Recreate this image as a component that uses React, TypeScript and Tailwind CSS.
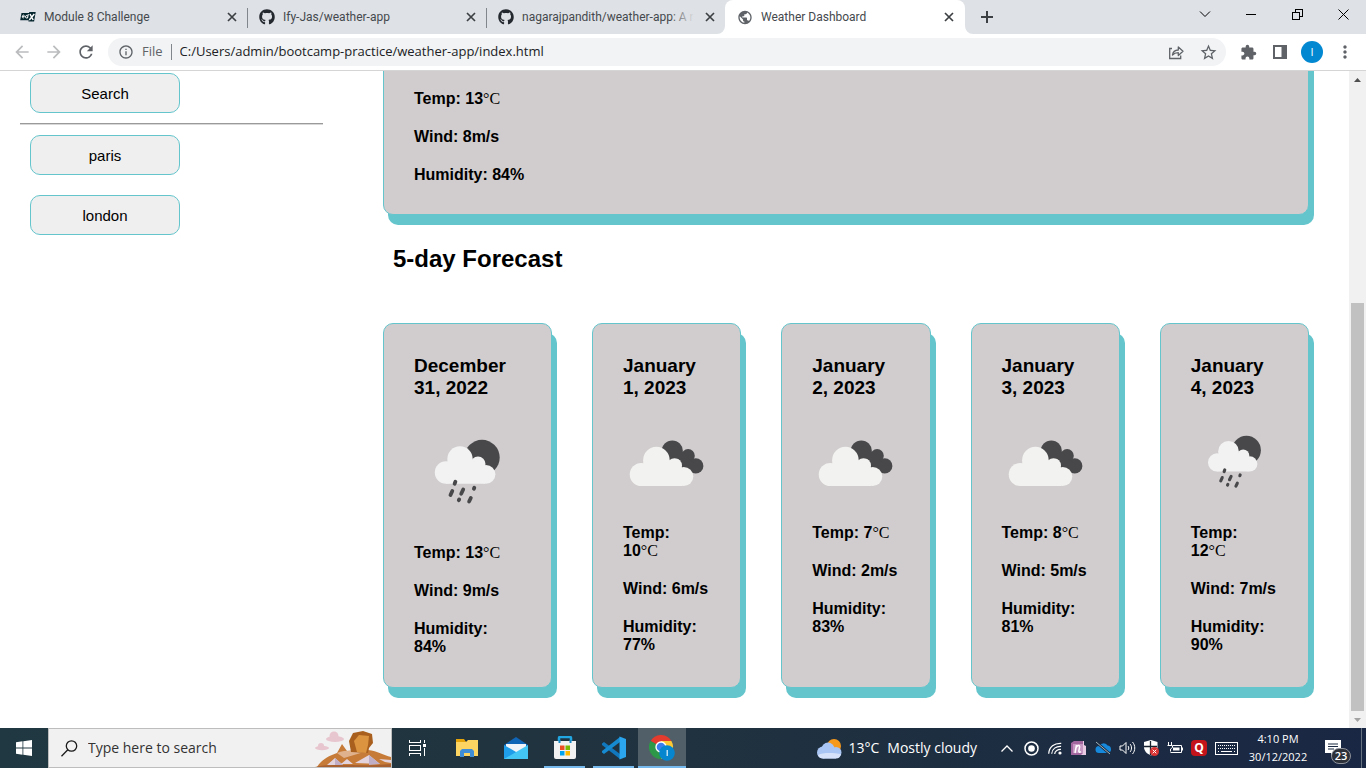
import type { ReactNode } from "react";
import { FaGithub } from "react-icons/fa";
import {
  MdArrowBack,
  MdArrowForward,
  MdExtension,
  MdInfoOutline,
  MdMoreVert,
  MdPublic,
  MdRefresh,
  MdStarBorder,
} from "react-icons/md";

/* ---------- browser chrome ---------- */

function CloseGlyph() {
  return (
    <svg width="10" height="10" viewBox="0 0 10 10" fill="none" stroke="#3c4043" strokeWidth="1.7">
      <path d="M1 1l8 8M9 1l-8 8" />
    </svg>
  );
}

function EdxIcon() {
  return (
    <svg width="16" height="16" viewBox="0 0 16 16">
      <path d="M1.5 4H9l.3-1h6.4l-1.6 9.5H8.4l.3-1.3H.2z" fill="#06262e" />
      <g fill="none" stroke="#fff" strokeWidth="1">
        <path d="M2.2 7.4h2.2c.2-1.6-1.8-1.8-2.1 0-.2 1.800 1 1.700 1.900 1.100M8.300 5L7.500 9.300M7.800 7c-1-1.400-2.400-.4-2.300 1 .1 1.400 1.600 1.300 2.200.1" />
        <path d="M10 5l3.200 6M14.300 5l-5 6" strokeWidth="1.500" />
      </g>
    </svg>
  );
}

type TabProps = { icon: ReactNode; title: string; active?: boolean; divider?: boolean };

function Tab({ icon, title, active = false, divider = false }: TabProps) {
  return (
    <div
      className={
        active
          ? "relative flex h-full w-60 items-center rounded-t-lg bg-white pr-2 pl-3"
          : "relative flex h-full w-[239px] items-center pr-[7px] pl-3"
      }
    >
      {active && (
        <>
          <svg className="absolute bottom-0 -left-2" width="8" height="8" viewBox="0 0 8 8">
            <path d="M8 0v8H0a8 8 0 0 0 8-8z" fill="#fff" />
          </svg>
          <svg className="absolute -right-2 bottom-0" width="8" height="8" viewBox="0 0 8 8">
            <path d="M0 0v8h8a8 8 0 0 1-8-8z" fill="#fff" />
          </svg>
        </>
      )}
      <span className="flex w-4 shrink-0 justify-center">{icon}</span>
      <span className="relative ml-2 min-w-0 flex-1 overflow-hidden font-['Roboto','Open_Sans',sans-serif] text-xs whitespace-nowrap text-[#45494d]">
        {title}
        {!active && (
          <span className="absolute inset-y-0 right-0 w-6 bg-linear-to-r from-transparent to-[#dee1e6]" />
        )}
      </span>
      <button aria-label={"Close " + title} className="ml-2 flex size-4 shrink-0 items-center justify-center">
        <CloseGlyph />
      </button>
      {divider && <span className="absolute top-2 -right-px h-5 w-px bg-[#80868b]" />}
    </div>
  );
}

function TabStrip() {
  return (
    <header className="flex h-[34px] shrink-0 bg-[#dee1e6] pl-2">
      <Tab icon={<EdxIcon />} title="Module 8 Challenge" divider />
      <Tab icon={<FaGithub size={16} color="#24292f" />} title="Ify-Jas/weather-app" divider />
      <Tab icon={<FaGithub size={16} color="#24292f" />} title="nagarajpandith/weather-app: A r" />
      <Tab icon={<MdPublic size={17} color="#5f6368" />} title="Weather Dashboard" active />
      <button aria-label="New tab" className="ml-2 flex w-7 items-center justify-center">
        <svg width="12" height="12" viewBox="0 0 12 12" stroke="#3c4043" strokeWidth="2">
          <path d="M6 0v12M0 6h12" />
        </svg>
      </button>
      <div className="ml-auto flex h-7 items-center text-black">
        <button aria-label="Search tabs" className="flex w-[46px] justify-center">
          <svg width="12" height="8" viewBox="0 0 12 8" fill="none" stroke="currentColor">
            <path d="M1 1.500l5 5 5-5" />
          </svg>
        </button>
        <button aria-label="Minimize" className="flex w-[46px] justify-center">
          <svg width="10" height="10" viewBox="0 0 10 10" stroke="currentColor" shapeRendering="crispEdges">
            <path d="M0 5.500h10" />
          </svg>
        </button>
        <button aria-label="Restore" className="flex w-[46px] justify-center">
          <svg width="11" height="11" viewBox="0 0 11 11" fill="none" stroke="currentColor" shapeRendering="crispEdges">
            <path d="M.5 3.500h7v7h-7zM3.500 3V.5h7v7H8" />
          </svg>
        </button>
        <button aria-label="Close window" className="flex w-[46px] justify-center">
          <svg width="11" height="11" viewBox="0 0 11 11" fill="none" stroke="currentColor">
            <path d="M.5.5l10 10M10.500.5l-10 10" />
          </svg>
        </button>
      </div>
    </header>
  );
}

function Toolbar() {
  return (
    <div className="flex h-[37px] shrink-0 items-center border-b border-[#d5d5d5] bg-white pl-3 text-[#5f6368]">
      <button aria-label="Back" className="text-[#babcbe]">
        <MdArrowBack size={20} />
      </button>
      <button aria-label="Forward" className="ml-3 text-[#babcbe]">
        <MdArrowForward size={20} />
      </button>
      <button aria-label="Reload" className="ml-3">
        <MdRefresh size={20} />
      </button>
      <div className="ml-3 flex h-7 min-w-0 flex-1 items-center rounded-full bg-[#f1f3f4] pr-2 pl-2.5">
        <MdInfoOutline size={16} className="shrink-0" />
        <label htmlFor="address" className="ml-2 text-[13px]">
          File
        </label>
        <span className="mx-2 h-4 w-px bg-[#80868b]" />
        <input
          id="address"
          className="min-w-0 flex-1 bg-transparent text-[13px] text-[#202124] outline-none"
          defaultValue="C:/Users/admin/bootcamp-practice/weather-app/index.html"
        />
        <button aria-label="Share" className="mr-3.5">
          <svg width="17" height="16" viewBox="0 0 17 16" fill="none" stroke="#5f6368" strokeWidth="1.300">
            <path d="M4 4.500H1.700v10h11v-3" />
            <path d="M4.500 11c.4-3.400 2.400-4.900 5.800-5V3l4.700 4.300-4.700 4.200V8.700C7.600 8.700 6 9.300 4.500 11z" strokeLinejoin="round" />
          </svg>
        </button>
        <button aria-label="Bookmark this page">
          <MdStarBorder size={19} />
        </button>
      </div>
      <button aria-label="Extensions" className="ml-3.5">
        <MdExtension size={17} />
      </button>
      <button aria-label="Side panel" className="ml-4">
        <svg width="14" height="14" viewBox="0 0 14 14">
          <path d="M0 0h14v14H0zM2 2v10h6.500V2z" fill="#5f6368" fillRule="evenodd" />
        </svg>
      </button>
      <button aria-label="Profile" className="ml-3.5 size-[22px] rounded-full bg-[#0288d1] text-[11px] text-white">
        I
      </button>
      <button aria-label="Menu" className="mr-[11px] ml-3">
        <MdMoreVert size={20} />
      </button>
    </div>
  );
}

function Scrollbar() {
  return (
    <div className="flex w-[17px] shrink-0 flex-col items-center bg-[#f1f1f1]">
      <svg width="17" height="17" viewBox="0 0 17 17" className="shrink-0">
        <path d="M5 11l3.500-4 3.500 4z" fill="#505050" />
      </svg>
      <div className="flex w-full flex-1 flex-col items-center">
        <div className="flex-[215]" />
        <div className="w-[13px] flex-[408] bg-[#c1c1c1]" />
      </div>
      <svg width="17" height="17" viewBox="0 0 17 17" className="shrink-0">
        <path d="M5 7l3.500 4L12 7z" fill="#a3a3a3" />
      </svg>
    </div>
  );
}

/* ---------- weather page ---------- */

function RainIcon() {
  return (
    <svg className="w-full" viewBox="0 0 107 107">
      <circle cx="68" cy="39.500" r="17.700" fill="#48484a" />
      <g fill="#f2f2f2">
        <circle cx="32" cy="54.500" r="11.200" />
        <circle cx="46" cy="41" r="12.700" />
        <circle cx="64" cy="46" r="7.500" />
        <circle cx="72" cy="56.300" r="9.400" />
        <path d="M34 42h23l14 8v15.700H32z" />
      </g>
      <g stroke="#48484a" strokeWidth="3.800" strokeLinecap="round">
        <path d="M41.400 63.700l-.8 2M38.300 73l-1.800 4M49.200 71.500l-2 4.200M60.300 69.800l-.4 1M45.200 81.400l-.4.8M56.800 80l-1.700 3.500" />
      </g>
    </svg>
  );
}

function CloudsIcon() {
  return (
    <svg className="w-full" viewBox="0 0 88 88">
      <g fill="#48484a">
        <circle cx="49.700" cy="33.300" r="10.700" />
        <circle cx="65.700" cy="38" r="6.700" />
        <circle cx="73.300" cy="48.300" r="7.800" />
        <path d="M50 25l11 10 10 10v10l-10-1z" />
      </g>
      <g fill="#f2f2f0">
        <circle cx="18.500" cy="57" r="11.700" />
        <circle cx="33.700" cy="42.500" r="13.400" />
        <circle cx="52" cy="48" r="7.500" />
        <circle cx="61.200" cy="59" r="9.700" />
        <path d="M21 44h25l14 10v14.700H18z" />
      </g>
    </svg>
  );
}

type Reading = { temp: number; wind: number; humidity: number };

function Readings({ temp, wind, humidity }: Reading) {
  return (
    <div className="flex flex-col gap-5 text-base leading-[18px] font-bold">
      <p className="pr-1">
        Temp: {temp}
        <span className="font-['Liberation_Serif',serif] font-normal">°C</span>
      </p>
      <p>Wind: {wind}m/s</p>
      <p>Humidity: {humidity}%</p>
    </div>
  );
}

const forecast: (Reading & { date: string; sky: "rain" | "clouds" })[] = [
  { date: "December 31, 2022", sky: "rain", temp: 13, wind: 9, humidity: 84 },
  { date: "January 1, 2023", sky: "clouds", temp: 10, wind: 6, humidity: 77 },
  { date: "January 2, 2023", sky: "clouds", temp: 7, wind: 2, humidity: 83 },
  { date: "January 3, 2023", sky: "clouds", temp: 8, wind: 5, humidity: 81 },
  { date: "January 4, 2023", sky: "rain", temp: 12, wind: 7, humidity: 90 },
];

function CityButton({ children }: { children: ReactNode }) {
  return (
    <button className="h-10 w-[150px] rounded-[10px] border border-[#64c5cc] bg-[#efefef] pt-0.5 text-[15px]">
      {children}
    </button>
  );
}

function WeatherPage() {
  return (
    <div className="flex min-w-0 flex-1 overflow-hidden bg-white font-['Liberation_Sans',Arial,sans-serif] text-black">
      <aside className="w-[343px] shrink-0 px-5 pt-0.5">
        <div className="px-2.5">
          <CityButton>Search</CityButton>
        </div>
        <hr className="my-2.5 h-0.5 border-t border-b border-t-[#9a9a9a] border-b-[#d8d8d8]" />
        <div className="flex flex-col items-start gap-5 px-2.5">
          <CityButton>paris</CityButton>
          <CityButton>london</CityButton>
        </div>
      </aside>
      <main className="min-w-0 flex-1 px-10">
        <section className="-mt-5 rounded-[10px] border border-[#64c5cc] bg-[#d1cdce] px-[30px] pt-[38px] pb-[30px] shadow-[5px_10px_#64c5cc]">
          <Readings temp={13} wind={8} humidity={84} />
        </section>
        <h2 className="mt-[30px] px-2.5 text-2xl leading-7 font-bold">5-day Forecast</h2>
        <section className="mt-[50px] grid grid-cols-[169px_repeat(4,minmax(0,1fr))] gap-10">
          {forecast.map((day) => (
            <article
              key={day.date}
              className="rounded-[10px] border border-[#64c5cc] bg-[#d1cdce] px-[30px] py-[31px] shadow-[5px_10px_#64c5cc]"
            >
              <h3 className="text-[19px] leading-[22px] font-bold">{day.date}</h3>
              <div className="py-[19px]">{day.sky === "rain" ? <RainIcon /> : <CloudsIcon />}</div>
              <Readings temp={day.temp} wind={day.wind} humidity={day.humidity} />
            </article>
          ))}
        </section>
      </main>
    </div>
  );
}

/* ---------- taskbar ---------- */

function DesertScene() {
  return (
    <svg width="76" height="37" viewBox="0 0 76 37" className="shrink-0 self-end">
      <g fill="#e7c6cf">
        <ellipse cx="20" cy="9" rx="9" ry="3" />
        <circle cx="19" cy="6" r="4.500" />
        <ellipse cx="7" cy="18" rx="7" ry="2.200" />
        <circle cx="6" cy="16" r="3" />
      </g>
      <path d="M2 37c5-8 12-11 20-14l5-9 5 7c10-1 13-1 21-1 10 1 15 5 23 7v10z" fill="#c67b38" />
      <path d="M22 23c8-3 18-3 27-1l-10 3-10 3z" fill="#e0b18d" />
      <path d="M36 22l-2-11 4-8 10-2 9 3 1 9-4 5-1 5z" fill="#a9601f" />
      <path d="M42 22l-3-11 5-6 10 1-1 9-2 8z" fill="#dc9440" />
      <path d="M12 35l8-7 8 7zM40 33l14-8 11 9zM64 29l12 1v3l-6-1zM26 34l6-5 6 5z" fill="#e3d3dd" />
      <path d="M20 28l8 7h-8zM54 25l11 9-11 1z" fill="#c0aec6" />
      <path d="M0 37c16-4 50 0 76-3v3z" fill="#a86030" />
    </svg>
  );
}

function TaskButton({ label, mark = "", children }: { label: string; mark?: "" | "open" | "active"; children: ReactNode }) {
  return (
    <button
      aria-label={label}
      className={
        mark === "active"
          ? "relative flex h-full w-12 items-center justify-center bg-[#505f68]"
          : "relative flex h-full w-[49px] items-center justify-center"
      }
    >
      {children}
      {mark === "open" && <span className="absolute inset-x-1 bottom-0 h-0.5 bg-[#76b9ed]" />}
      {mark === "active" && <span className="absolute inset-x-0 bottom-0 h-0.5 bg-[#76b9ed]" />}
    </button>
  );
}

function PinnedApps() {
  return (
    <div className="ml-px flex h-full">
      <TaskButton label="Task view">
        <svg width="17" height="16" viewBox="0 0 17 16" fill="none" stroke="#fff" shapeRendering="crispEdges">
          <path d="M.5 0v2.500h11V0M.5 5.500h11v5H.5zM.5 16v-2.500h11V16M15.500 0v3M15.500 8v8" />
          <path d="M14 4h3v3h-3z" fill="#fff" stroke="none" />
        </svg>
      </TaskButton>
      <TaskButton label="File Explorer">
        <svg width="22" height="20" viewBox="0 0 22 20">
          <path d="M0 2h8l2 2h11v4H0z" fill="#dc9e12" />
          <path d="M0 4h10l2-2h10v16H0z" fill="#fcd462" />
          <path d="M0 1h8l2 3H0z" fill="#e5a50a" />
          <path d="M4 19v-6l2-2h10l2 2v6h-4v-4H8v4z" fill="#3f8ed5" />
        </svg>
      </TaskButton>
      <TaskButton label="Mail">
        <svg width="24" height="22" viewBox="0 0 24 22">
          <path d="M0 8L12 0l12 8v14H0z" fill="#1065b6" />
          <path d="M2 7h20v7l-10 2L2 14z" fill="#f1f4f8" />
          <path d="M0 8l24 14H0z" fill="#1f9de8" />
          <path d="M24 8L0 22h24z" fill="#44c6f4" />
        </svg>
      </TaskButton>
      <TaskButton label="Microsoft Store" mark="open">
        <svg width="24" height="24" viewBox="0 0 24 24">
          <path d="M6 7V2q0-1 1-1h10q1 0 1 1v5" fill="none" stroke="#22a6e2" strokeWidth="2.500" />
          <path d="M1 5h22v16q0 2-2 2H3q-2 0-2-2z" fill="#f1f1f1" />
          <path d="M6.500 4v3M17.500 4v3" stroke="#1688c5" strokeWidth="2" />
          <path d="M7 9.500h4.500V14H7z" fill="#ee4f22" />
          <path d="M12.500 9.500H17V14h-4.500z" fill="#7db900" />
          <path d="M7 15h4.500v4.500H7z" fill="#00a3ee" />
          <path d="M12.500 15H17v4.500h-4.500z" fill="#fdb800" />
        </svg>
      </TaskButton>
      <TaskButton label="Visual Studio Code" mark="open">
        <svg width="24" height="24" viewBox="0 0 24 24">
          <path d="M0 7.500l2-1.500 16 12v5L0 9z" fill="#1178bd" />
          <path d="M0 16.500l2 1.500L18 6V1L0 15z" fill="#168bd2" />
          <path d="M17.500.5L24 3v18l-6.500 2.500z" fill="#2aa5ee" />
        </svg>
      </TaskButton>
      <TaskButton label="Google Chrome" mark="active">
        <svg width="26" height="26" viewBox="0 0 26 26">
          <path d="M12 12L1.600 6A12 12 0 0 1 22.400 6z" fill="#e33b2e" />
          <path d="M12 12V6h10.400A12 12 0 0 1 12 24z" fill="#fcc934" />
          <path d="M12 12l5 3-5 9A12 12 0 0 1 1.600 6z" fill="#2d9847" />
          <circle cx="12" cy="12" r="5.700" fill="#fff" />
          <circle cx="12" cy="12" r="4.300" fill="#3c7ded" />
          <circle cx="18" cy="18" r="7.800" fill="#0586cf" />
          <path d="M17.500 15h1.500v6h-1.500z" fill="#b9def3" />
        </svg>
      </TaskButton>
    </div>
  );
}

function TrayButton({ label, children }: { label: string; children: ReactNode }) {
  return (
    <button aria-label={label} className="flex h-full w-6 items-center justify-center">
      {children}
    </button>
  );
}

function Tray() {
  return (
    <div className="ml-auto flex h-full items-center">
      <button className="flex items-center text-sm whitespace-nowrap">
        <svg width="25" height="21" viewBox="0 0 25 21">
          <circle cx="17" cy="8" r="7" fill="#f79a1c" />
          <g fill="#a9c5f3">
            <circle cx="6" cy="14.500" r="6" />
            <circle cx="11" cy="11" r="6.500" />
            <circle cx="19" cy="14.500" r="5.500" />
            <path d="M6 12h13v8.500H6z" />
          </g>
          <path d="M1 17c5-3 17-2 23-1-1 3-2 4.500-5 4.500H6q-4 0-5-3.500z" fill="#d5e2fa" />
        </svg>
        <span className="ml-1.5">13°C</span>
        <span className="ml-2">Mostly cloudy</span>
      </button>
      <div className="ml-[18px] flex h-full items-center">
        <TrayButton label="Show hidden icons">
          <svg width="12" height="7" viewBox="0 0 12 7" fill="none" stroke="#fff" strokeWidth="1.300">
            <path d="M.5 6.500L6 1l5.500 5.500" />
          </svg>
        </TrayButton>
        <TrayButton label="Recorder">
          <svg width="15" height="15" viewBox="0 0 15 15">
            <circle cx="7.500" cy="7.500" r="6.500" fill="none" stroke="#fff" strokeWidth="1.500" />
            <circle cx="7.500" cy="7.500" r="3.300" fill="#fff" />
          </svg>
        </TrayButton>
        <TrayButton label="Network">
          <svg width="14" height="14" viewBox="0 0 14 14" fill="none" stroke="#fff" strokeWidth="1.200">
            <path d="M1 13C1 6 6 2 13 2M4 13c0-5 4-8 9-8M7 13c0-3 3-5 6-5" transform="rotate(3 7 7)" />
            <circle cx="12" cy="12" r="1.600" fill="#fff" stroke="none" />
          </svg>
        </TrayButton>
        <TrayButton label="OneNote">
          <svg width="16" height="15" viewBox="0 0 16 15">
            <path d="M3 0h10v4l2 1v9H3z" fill="#e8cbe3" />
            <path d="M0 2l3-2h9v12l-2 2H0z" fill="#a367a0" />
            <path d="M2 3h10v9H2z" fill="#c596c1" />
            <path d="M4 12l1.500-8M5 6.500C7 3.500 9 4 8.500 6.500L7.800 10c0 1.500 1 1.500 2 .5" fill="none" stroke="#fff" strokeWidth="1.500" />
          </svg>
        </TrayButton>
        <TrayButton label="OneDrive">
          <svg width="17" height="14" viewBox="0 0 17 14">
            <path d="M4 12a3.500 3.500 0 0 1 0-7 5 5 0 0 1 8.500-.5A3.800 3.800 0 0 1 13 12z" fill="#1689dc" />
            <path d="M1 1l14 12" stroke="#1b2e43" strokeWidth="2.500" />
            <path d="M1 1l14 12" stroke="#a8b2ba" />
          </svg>
        </TrayButton>
        <TrayButton label="Volume">
          <svg width="17" height="14" viewBox="0 0 17 14" fill="none" stroke="#fff">
            <path d="M1 5h2.500L7 1.500v11L3.500 9H1z" />
            <path d="M9 5c1 1 1 3 0 4M11 3c2 2 2 6 0 8M13.500 1c3 3.500 3 8.500 0 12" />
          </svg>
        </TrayButton>
        <TrayButton label="Windows Security">
          <svg width="17" height="17" viewBox="0 0 17 17">
            <path d="M8 0l6.500 2v5c0 4-3 7-6.500 8.500C4 14 1 11 1 7V2z" fill="#fff" />
            <path d="M7.500 1v14M1 6.500h13" stroke="#17222e" strokeWidth="1.300" />
            <circle cx="11.500" cy="11.500" r="4.500" fill="#da3434" />
            <path d="M9.700 9.700l3.600 3.600M13.300 9.700l-3.600 3.600" stroke="#fff" />
          </svg>
        </TrayButton>
        <TrayButton label="Battery">
          <svg width="17" height="12" viewBox="0 0 17 12" fill="none" stroke="#fff">
            <path d="M1.500 0v3M4.500 0v3M.5 3.500h5v2l-2 1.500v2.500" />
            <path d="M6 3.500h8.500v7H3.500M15.500 5.500v3" />
            <path d="M6 5.500h6.500v3H6z" fill="#fff" stroke="none" />
          </svg>
        </TrayButton>
        <TrayButton label="Quick Heal">
          <span className="flex h-4 w-4 items-center justify-center rounded-sm bg-[#c3141b] text-xs font-bold text-white">
            Q
          </span>
        </TrayButton>
        <button aria-label="Touch keyboard" className="flex h-full w-[30px] items-center justify-center">
          <svg width="23" height="13" viewBox="0 0 23 13" fill="none" stroke="#fff" shapeRendering="crispEdges">
            <path d="M.5.5h22v12H.5z" />
            <path d="M3 3.500h17M3 6.500h17" strokeDasharray="1 1" />
            <path d="M3 9.500h1M6 9.500h11M19 9.500h1" />
          </svg>
        </button>
      </div>
      <button className="w-[74px] text-center text-[11px] leading-[18px] whitespace-nowrap">
        <span className="block">4:10 PM</span>
        <span className="block">30/12/2022</span>
      </button>
      <button aria-label="Notifications" className="relative mr-2.5 ml-1.5 h-full w-[30px]">
        <svg className="absolute top-3 left-1" width="17" height="17" viewBox="0 0 17 17">
          <path d="M0 0h16v13h-6l-4 4v-4H0z" fill="#fff" />
          <path d="M3 4h10M3 6.500h10M3 9h6" stroke="#1b2a42" />
        </svg>
        <span className="absolute right-0 bottom-1 flex h-4 w-5 items-center justify-center rounded-full border border-[#8d929b] bg-[#2b3039] text-[11px] font-semibold">
          23
        </span>
      </button>
      <span className="mr-1 h-full w-px bg-[#66727f]" />
    </div>
  );
}

function Taskbar() {
  return (
    <footer className="flex h-10 shrink-0 items-center bg-linear-to-r from-[#203841] via-[#20323f] to-[#1a2744] text-white">
      <button aria-label="Start" className="flex h-full w-12 items-center justify-center">
        <svg width="16" height="16" viewBox="0 0 16 16" fill="#fff">
          <path d="M0 2.200L6.500 1.300v6.300H0zM7.300 1.200L16 0v7.600H7.300zM0 8.400h6.500v6.300L0 13.800zM7.300 8.400H16V16l-8.700-1.200z" />
        </svg>
      </button>
      <label className="flex h-full w-[344px] items-center border border-[#bdbdbd] bg-[#f1f1f1] pl-3">
        <svg width="17" height="17" viewBox="0 0 17 17" fill="none" stroke="#1a1a1a" strokeWidth="1.300" className="shrink-0">
          <circle cx="10.500" cy="6" r="5.200" />
          <path d="M6.800 9.800L.5 16.200" />
        </svg>
        <input
          aria-label="Search Windows"
          placeholder="Type here to search"
          className="ml-2.5 min-w-0 flex-1 bg-transparent text-sm outline-none placeholder:text-[#333]"
        />
        <DesertScene />
      </label>
      <PinnedApps />
      <Tray />
    </footer>
  );
}

export default function App() {
  return (
    <div className="flex h-screen flex-col overflow-hidden bg-white font-['Open_Sans','Noto_Sans',sans-serif]">
      <TabStrip />
      <Toolbar />
      <div className="flex min-h-0 flex-1">
        <WeatherPage />
        <Scrollbar />
      </div>
      <Taskbar />
    </div>
  );
}
